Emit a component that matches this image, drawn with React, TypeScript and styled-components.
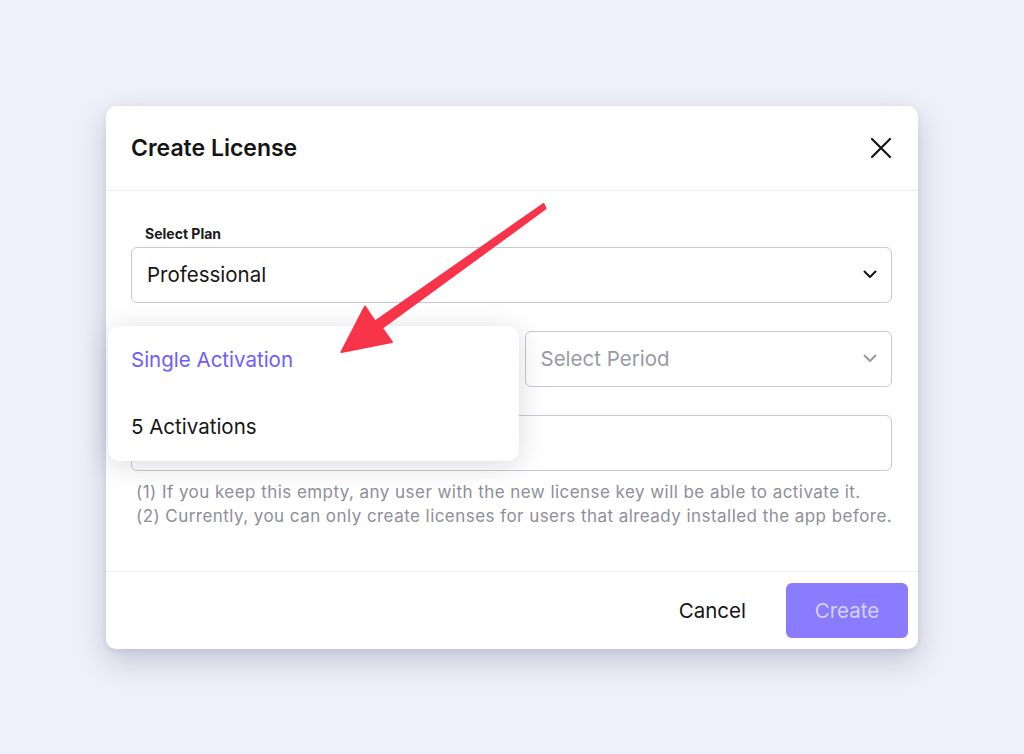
import React from 'react';
import styled, {createGlobalStyle} from 'styled-components';

// ==================== 全局样式 ====================

const GlobalStyle = createGlobalStyle`
  html, body {
    margin: 0;
    padding: 0;
    background: #f0f0fa;
    font-family: Inter, "Noto Sans", "Liberation Sans", sans-serif;
  }
  * { box-sizing: border-box; }
`;

// ==================== 样式组件 ====================

const Page = styled.div`
  position: relative;
  width: 1024px;
  height: 754px;
  display: flex;
  align-items: center;
  justify-content: center;
  background: #f0f0fa;
  overflow: hidden;
`;

const Modal = styled.div`
  width: 812px;
  height: 543px;
  background: #fff;
  border-radius: 10px;
  box-shadow: 0 12px 30px rgba(40, 40, 90, 0.22), 0 2px 6px rgba(40, 40, 90, 0.08);
  display: flex;
  flex-direction: column;
`;

const Header = styled.div`
  height: 85px;
  display: flex;
  align-items: center;
  justify-content: space-between;
  padding: 0 26px 0 25px;
  border-bottom: 1px solid #eeeef6;
`;

const Title = styled.h2`
  margin: 0;
  font-size: 23px;
  font-weight: 600;
  color: #151515;
`;

const CloseButton = styled.button`
  border: none;
  background: none;
  padding: 0;
  display: flex;
  cursor: pointer;
  color: #151515;
`;

const Body = styled.div`
  flex: 1;
  padding: 34px 26px 0 25px;
  display: flex;
  flex-direction: column;
`;

const Label = styled.label`
  font-size: 14px;
  font-weight: 700;
  color: #1a1a1a;
  padding-left: 14px;
  margin-bottom: 5px;
`;

const SelectBox = styled.div<{ $placeholder?: boolean }>`
  height: 56px;
  border: 1px solid #c9c9d6;
  border-radius: 6px;
  display: flex;
  align-items: center;
  justify-content: space-between;
  padding: 0 14px 0 15px;
  font-size: 20.5px;
  color: ${p => (p.$placeholder ? '#9a9aa6' : '#161616')};
  background: #fff;
`;

const Row = styled.div`
  position: relative;
  margin-top: 28px;
  display: grid;
  grid-template-columns: 1fr 1fr;
  gap: 26px;
`;

const InputBox = styled.div`
  margin-top: 28px;
  height: 56px;
  border: 1px solid #c9c9d6;
  border-radius: 6px;
`;

const Help = styled.div`
  margin-top: 9px;
  padding-left: 5px;
  font-size: 17px;
  line-height: 24px;
  color: #8e8e9a;
  letter-spacing: 0.45px;
  white-space: nowrap;
`;

// 下拉菜单浮层
const Dropdown = styled.div`
  position: absolute;
  left: -23px;
  top: -5px;
  width: 411px;
  height: 135px;
  background: #fff;
  border-radius: 12px;
  box-shadow: 0 4px 28px rgba(30, 30, 60, 0.16);
  display: flex;
  flex-direction: column;
  z-index: 2;
`;

const Option = styled.div<{ $active?: boolean }>`
  height: 67px;
  display: flex;
  align-items: center;
  padding-left: 23px;
  font-size: 20.5px;
  color: ${p => (p.$active ? '#6e5cff' : '#161616')};
`;

const Footer = styled.div`
  height: 78px;
  border-top: 1px solid #eeeef6;
  display: flex;
  align-items: center;
  justify-content: flex-end;
  gap: 40px;
  padding-right: 10px;
`;

const TextButton = styled.button`
  border: none;
  background: none;
  font-family: inherit;
  font-size: 20.5px;
  color: #151515;
  padding: 0;
  cursor: pointer;
`;

const PrimaryButton = styled.button`
  width: 122px;
  height: 55px;
  border: none;
  border-radius: 6px;
  background: #8a7bff;
  color: #d6d2f4;
  font-family: inherit;
  font-size: 20.5px;
  cursor: pointer;
`;

// 标注箭头（覆盖在页面上）
const ArrowLayer = styled.svg`
  position: absolute;
  left: 0;
  top: 0;
  pointer-events: none;
  z-index: 5;
`;

// ==================== 子组件 ====================

const Chevron: React.FC<{ color: string }> = ({color}) => (
    <svg width="14" height="9" viewBox="0 0 14 9" fill="none">
        <path d="M1.5 1.5 L7 7 L12.5 1.5" stroke={color} strokeWidth="2" strokeLinecap="round" strokeLinejoin="round"/>
    </svg>
);

// ==================== 主组件 ====================

const App: React.FC = () => (
    <>
        <GlobalStyle/>
        <Page>
            <Modal>
                <Header>
                    <Title>Create License</Title>
                    <CloseButton aria-label="Close">
                        <svg width="22" height="22" viewBox="0 0 22 22" fill="none">
                            <path d="M2 2 L20 20 M20 2 L2 20" stroke="currentColor" strokeWidth="2.2" strokeLinecap="round"/>
                        </svg>
                    </CloseButton>
                </Header>

                <Body>
                    <Label>Select Plan</Label>
                    <SelectBox>
                        Professional
                        <Chevron color="#161616"/>
                    </SelectBox>

                    <Row>
                        {/* 被下拉菜单遮住的激活数选择框 */}
                        <SelectBox $placeholder>
                            <span/>
                            <Chevron color="#9a9aa6"/>
                        </SelectBox>
                        <SelectBox $placeholder>
                            Select Period
                            <Chevron color="#9a9aa6"/>
                        </SelectBox>
                        <Dropdown>
                            <Option $active>Single Activation</Option>
                            <Option>5 Activations</Option>
                        </Dropdown>
                    </Row>

                    <InputBox/>
                    <Help>
                        (1) If you keep this empty, any user with the new license key will be able to activate it.
                        <br/>
                        (2) Currently, you can only create licenses for users that already installed the app before.
                    </Help>
                </Body>

                <Footer>
                    <TextButton>Cancel</TextButton>
                    <PrimaryButton>Create</PrimaryButton>
                </Footer>
            </Modal>

            <ArrowLayer width="1024" height="754" viewBox="0 0 1024 754">
                <path d="M543.5 204 L375 321.5 L365 306.5 L341.5 352 L392 342 L382 328 L545.5 208.5 Z"
                      fill="#f8344a" stroke="#f8344a" strokeWidth="2" strokeLinejoin="round"/>
            </ArrowLayer>
        </Page>
    </>
);

export default App;
